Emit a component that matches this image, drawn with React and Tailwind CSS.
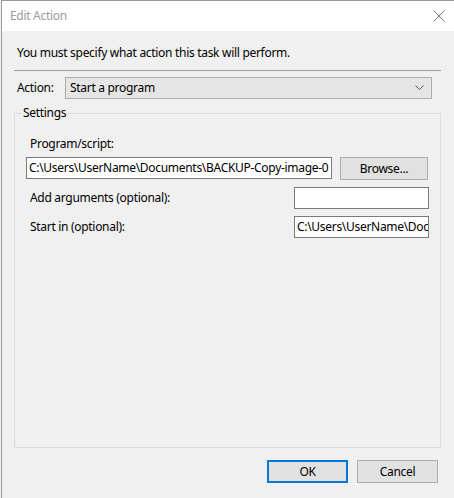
import React from "react";

function Field({ value, className }) {
  return (
    <div className={"h-[22px] bg-white border border-[#7a7a7a] overflow-hidden whitespace-nowrap pl-[2px] leading-[20px] " + className}>
      {value}
    </div>
  );
}

function Btn({ children, primary }) {
  return (
    <div
      className={
        "w-[81px] h-[23px] flex items-center justify-center bg-[#e1e1e1] " +
        (primary ? "border-2 border-[#0078d7]" : "border border-[#adadad]")
      }
    >
      {children}
    </div>
  );
}

export default function App() {
  return (
    <div
      className="w-[454px] h-[498px] bg-[#f0f0f0] overflow-hidden text-[12px] tracking-[-0.3px] text-black"
      style={{ fontFamily: "'Noto Sans', sans-serif" }}
    >
      <div className="ml-px w-[453px] h-[498px] border-l border-t border-[#9a9a9a] flex flex-col">
        {/* title bar */}
        <div className="h-[30px] bg-white flex items-center justify-between pl-[8px] pr-[9px] shrink-0">
          <span className="text-[#9b9b9b] text-[12px]">Edit Action</span>
          <svg width="12" height="12" viewBox="0 0 12 12" className="text-[#7c7c7c]">
            <path d="M0.5 0.5 L11.5 11.5 M11.5 0.5 L0.5 11.5" stroke="currentColor" strokeWidth="1" fill="none" />
          </svg>
        </div>

        {/* body */}
        <div className="flex flex-col">
          <div className="mt-[14px] pl-[15px] leading-[16px]">You must specify what action this task will perform.</div>
          <div className="mt-[9px] ml-[12px] w-[427px] h-px bg-[#a0a0a0]" />

          <div className="mt-[6px] flex items-center">
            <span className="pl-[15px] w-[63px]">Action:</span>
            <div className="w-[367px] h-[22px] bg-[#e5e5e5] border border-[#acacac] flex items-center justify-between pl-[4px] pr-[7px]">
              <span>Start a program</span>
              <svg width="9" height="6" viewBox="0 0 9 6">
                <path d="M0.5 0.5 L4.5 4.5 L8.5 0.5" stroke="#5a5a5a" strokeWidth="1" fill="none" />
              </svg>
            </div>
          </div>

          {/* Settings group */}
          <div className="relative mt-[14px] ml-[12px] w-[427px] h-[335px] border border-[#dcdcdc]">
            <span className="absolute left-[7px] top-[-9px] px-[1px] bg-[#f0f0f0] leading-[16px]">Settings</span>

            <div className="mt-[22px] pl-[15px] leading-[16px]">Program/script:</div>
            <div className="mt-[5px] flex items-start">
              <Field
                className="ml-[11px] w-[306px] h-[21px]"
                value="C:\Users\UserName\Documents\BACKUP-Copy-image-0"
              />
              <div className="ml-[8px] w-[88px] h-[23px] flex items-center justify-center bg-[#e1e1e1] border border-[#adadad]">
                Browse...
              </div>
            </div>

            <div className="mt-[7px] flex items-center">
              <span className="pl-[15px] w-[279px]">Add arguments (optional):</span>
              <Field className="w-[135px]" value="" />
            </div>

            <div className="mt-[7px] flex items-center">
              <span className="pl-[15px] w-[279px]">Start in (optional):</span>
              <Field className="w-[135px]" value="C:\Users\UserName\Doc" />
            </div>
          </div>

          <div className="mt-[12px] flex justify-end gap-[9px] pr-[16px]">
            <Btn primary>OK</Btn>
            <Btn>Cancel</Btn>
          </div>
        </div>
      </div>
    </div>
  );
}
